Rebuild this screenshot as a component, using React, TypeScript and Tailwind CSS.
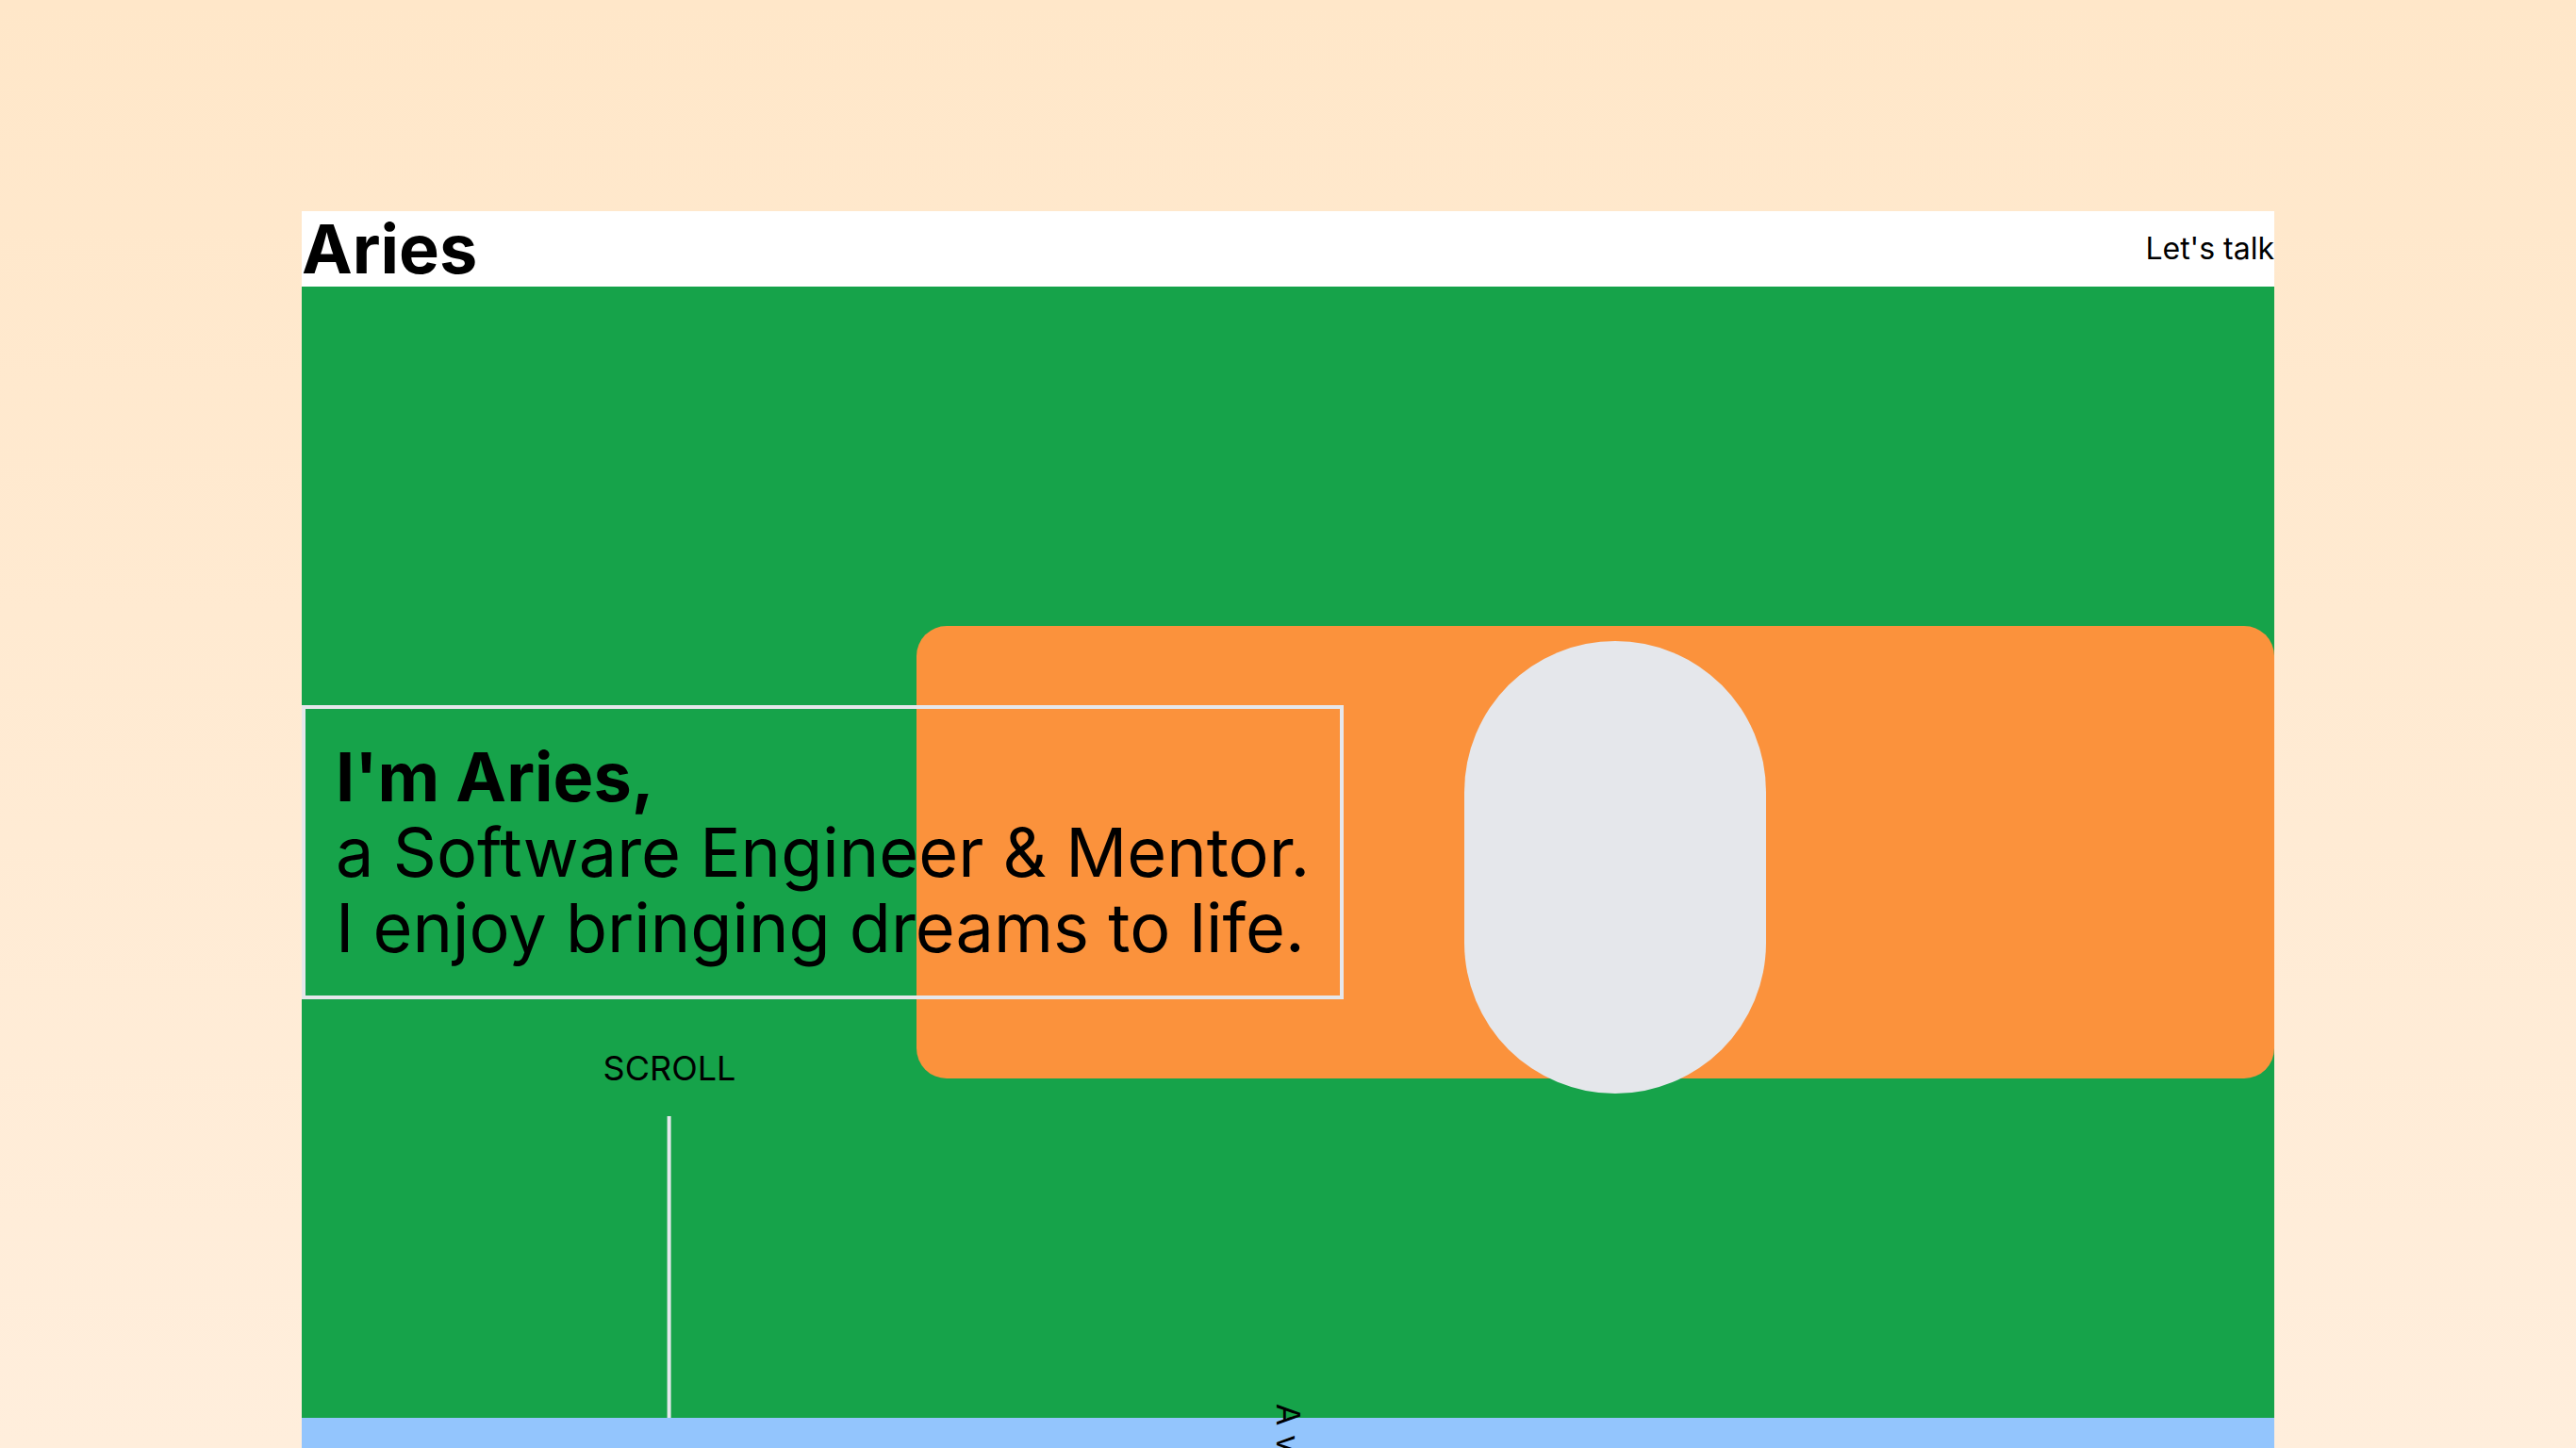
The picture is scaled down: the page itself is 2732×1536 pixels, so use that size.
export default function App() {
    return (
        <div className="min-h-screen bg-[linear-gradient(to_bottom,#ffe7c9_0px,#ffeedc_1536px)] px-80 pt-56 font-['Inter','Liberation_Sans',sans-serif] text-black">
            <header className="flex h-20 items-center justify-between bg-white">
                <h1 className="text-7xl leading-none font-bold">Aries</h1>
                <a href="#contact" className="text-[32px] leading-10">Let's talk</a>
            </header>

            <section className="relative grid h-[1200px] bg-[#16a34a]">
                <div className="relative col-start-1 row-start-1 h-[480px] w-[1440px] self-center justify-self-end rounded-[32px] bg-[#fb923c]">
                    <div className="absolute top-4 left-[581px] h-[480px] w-80 rounded-full bg-[#e5e7eb]" />
                </div>

                <div className="z-10 col-start-1 row-start-1 self-center justify-self-start border-4 border-[#e5e7eb] px-8 py-8 text-7xl leading-[80px] whitespace-nowrap">
                    <p className="font-bold">I'm Aries,</p>
                    <p>a Software Engineer &amp; Mentor.</p>
                    <p>I enjoy bringing dreams to life.</p>
                </div>

                <div className="absolute bottom-0 left-[390px] flex -translate-x-1/2 flex-col items-center">
                    <span className="text-4xl leading-10">SCROLL</span>
                    <span className="mt-[31px] h-80 w-1 bg-[#e5e7eb]" />
                </div>
            </section>

            <section className="relative h-[800px] bg-[#93c5fd]">
                <p className="absolute -top-[15px] left-1/2 -translate-x-1/2 text-[34px] leading-10 [writing-mode:vertical-rl]">
                    A very warm welcome
                </p>
            </section>
        </div>
    );
}
